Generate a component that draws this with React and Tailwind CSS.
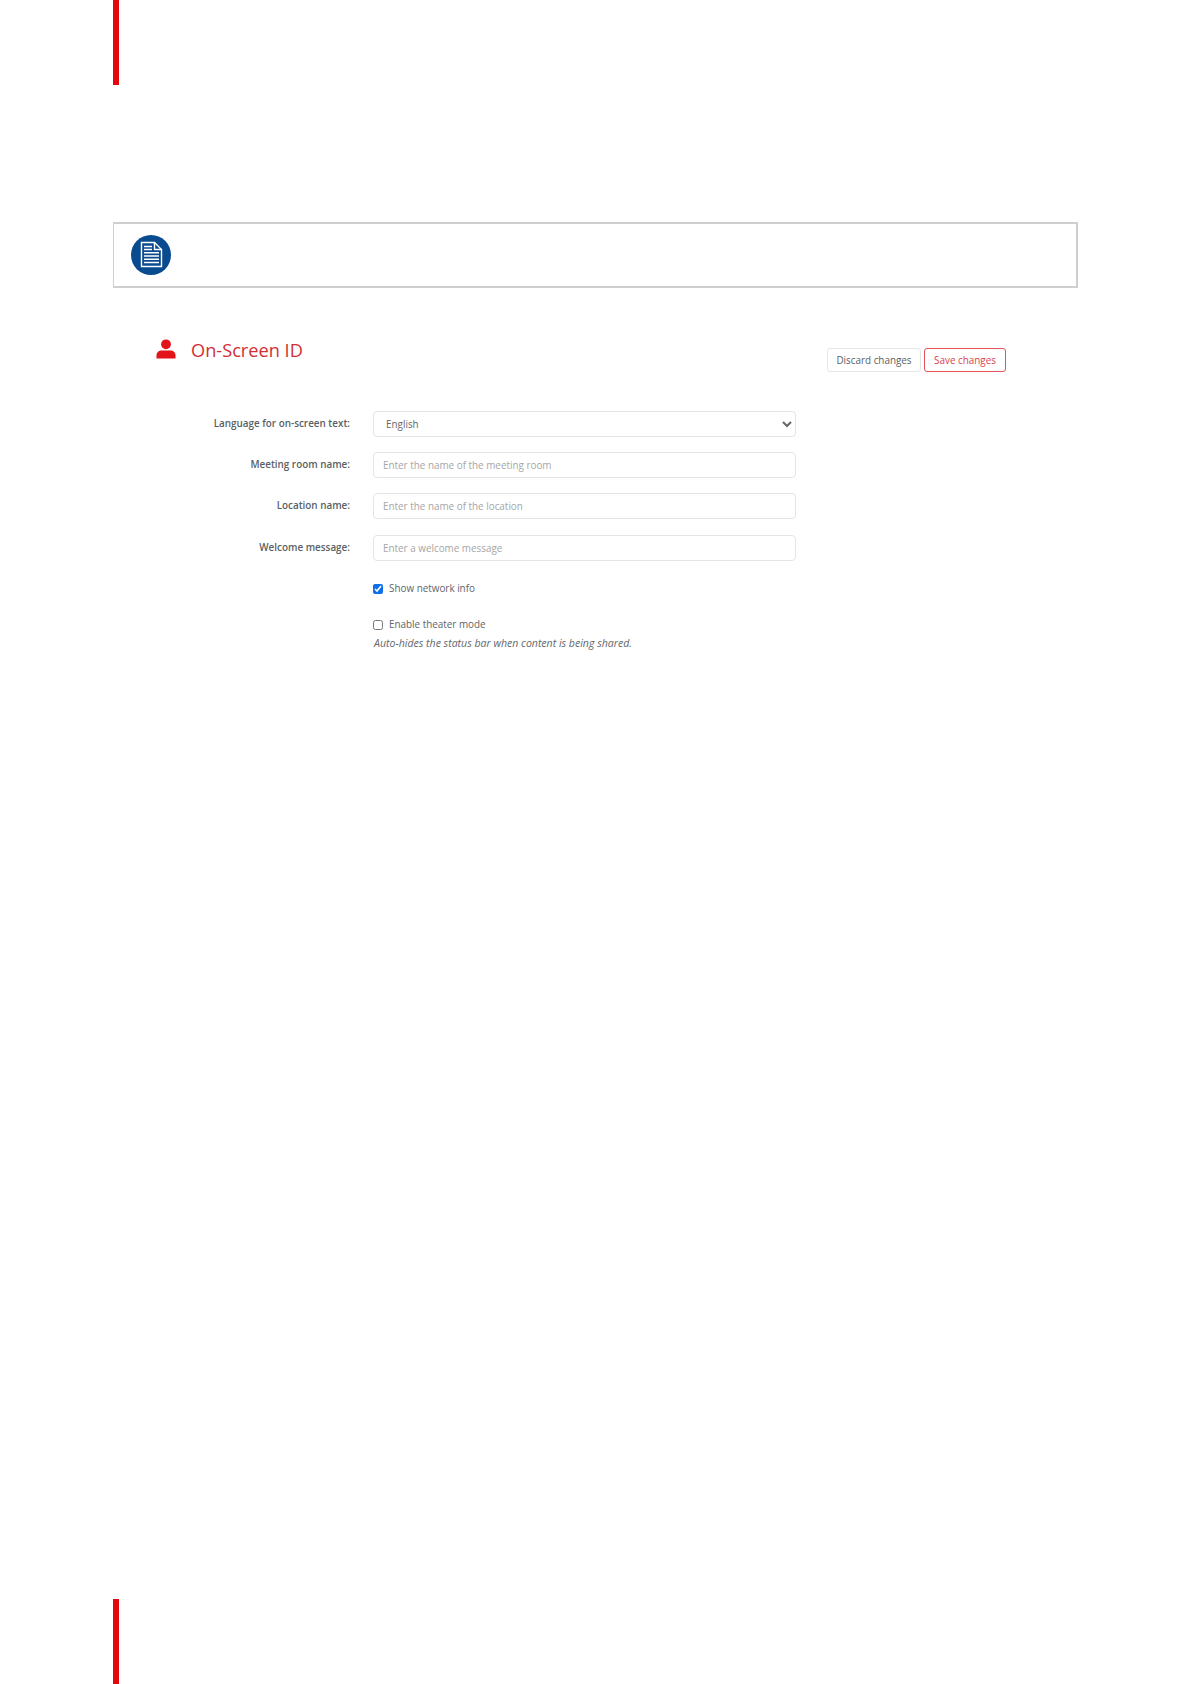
import React from "react";

function NoteIcon() {
  return (
    <svg width="40" height="40" viewBox="0 0 40 40" className="shrink-0">
      <circle cx="20" cy="20" r="20" fill="#0a4a8f" />
      <path d="M10.5 7.5H23.5L30.5 14.5V31.5H10.5Z" fill="none" stroke="#fff" strokeWidth="1.4" />
      <path d="M23.5 7.5V14.5H30.5" fill="none" stroke="#fff" strokeWidth="1.4" />
      <path d="M13 11.5H21M13 14.5H21M13 17.8H28M13 21H28M13 24.2H28M13 27.4H28" stroke="#fff" strokeWidth="1.5" />
    </svg>
  );
}

function PersonIcon() {
  return (
    <svg width="20" height="20" viewBox="0 0 20 20" className="shrink-0">
      <circle cx="10" cy="5.3" r="4.9" fill="#e4141b" />
      <path d="M0.5 19.6V16.2C0.5 13 3 11.4 5.6 11.4H14.4C17 11.4 19.5 13 19.5 16.2V19.6Z" fill="#e4141b" />
    </svg>
  );
}

function Row({ label, children }) {
  return (
    <div className="flex items-center h-[26px]">
      <label className="w-[214px] text-right text-[9.9px] font-semibold text-[#5a5f64] shrink-0 -mt-[1px]">
        {label}
      </label>
      <div className="ml-[23px] w-[423px]">{children}</div>
    </div>
  );
}

function TextInput({ placeholder }) {
  return (
    <input
      type="text"
      placeholder={placeholder}
      className="block w-full h-[26px] rounded-[4px] border border-[#e4e4e4] bg-white px-[9px] text-[9.9px] text-[#555] placeholder:text-[#a6a6a6] outline-none"
    />
  );
}

export default function App() {
  return (
    <div
      className="flex flex-col h-[1684px] w-[1191px] bg-white overflow-hidden"
      style={{ fontFamily: '"Open Sans", "Noto Sans", sans-serif' }}
    >
      <div className="ml-[113px] w-[6px] h-[85px] bg-[#e8060e] shrink-0" />

      <div className="ml-[113px] mt-[137px] w-[965px] h-[66px] border-2 border-l border-[#cfcfcf] flex items-center pl-[17px] shrink-0">
        <NoteIcon />
      </div>

      <div className="ml-[156px] mt-[51px] w-[850px] flex items-start shrink-0">
        <div className="flex items-center h-[20px]">
          <PersonIcon />
          <h2 className="ml-[15px] mt-[3px] text-[18.2px] leading-none font-normal text-[#d22f33]">On-Screen ID</h2>
        </div>
        <div className="ml-auto mt-[9px] flex gap-[3px]">
          <button className="h-[24px] w-[94px] rounded-[3px] border border-[#e6e6e6] bg-white text-[9.9px] text-[#5a5f64]">
            Discard changes
          </button>
          <button className="h-[24px] w-[82px] rounded-[3px] border border-[#e2505a] bg-white text-[9.9px] text-[#d9434c]">
            Save changes
          </button>
        </div>
      </div>

      <div className="ml-[136px] mt-[39px] shrink-0 flex flex-col gap-[15.2px]">
        <Row label="Language for on-screen text:">
          <select className="block w-full h-[26px] rounded-[4px] border border-[#e4e4e4] bg-white pl-[8px] pr-[2px] text-[9.9px] text-[#666] outline-none">
            <option>English</option>
          </select>
        </Row>
        <Row label="Meeting room name:">
          <TextInput placeholder="Enter the name of the meeting room" />
        </Row>
        <Row label="Location name:">
          <TextInput placeholder="Enter the name of the location" />
        </Row>
        <Row label="Welcome message:">
          <TextInput placeholder="Enter a welcome message" />
        </Row>
      </div>

      <div className="ml-[373px] mt-[21px] shrink-0 text-[9.9px] text-[#60656a]">
        <label className="flex items-center h-[16px]">
          <input type="checkbox" defaultChecked className="m-0 -mt-[2px] w-[10px] h-[10px] accent-[#0f6fe8]" />
          <span className="ml-[6px] -mt-[2px]">Show network info</span>
        </label>
        <label className="flex items-center h-[16px] mt-[20px]">
          <input type="checkbox" className="m-0 -mt-[2px] w-[10px] h-[10px]" />
          <span className="ml-[6px] -mt-[2px]">Enable theater mode</span>
        </label>
        <p className="mt-[2px] ml-[1px] italic text-[10.55px] text-[#63686d]">
          Auto-hides the status bar when content is being shared.
        </p>
      </div>

      <div className="ml-[113px] mt-auto w-[6px] h-[85px] bg-[#e8060e] shrink-0" />
    </div>
  );
}
